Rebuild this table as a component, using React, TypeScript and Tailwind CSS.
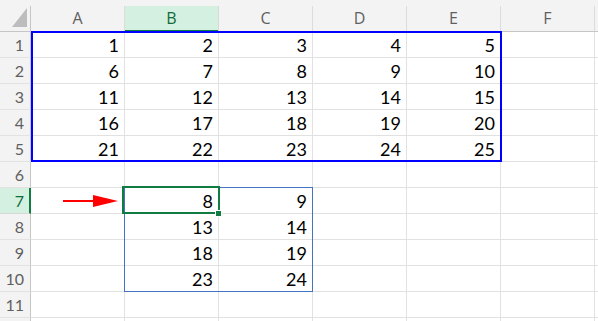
const COLS = ['A', 'B', 'C', 'D', 'E', 'F', 'G'];

// sheet contents, keyed by row number; each entry covers columns A..G
const DATA: Record<number, (number | null)[]> = {
  1: [1, 2, 3, 4, 5],
  2: [6, 7, 8, 9, 10],
  3: [11, 12, 13, 14, 15],
  4: [16, 17, 18, 19, 20],
  5: [21, 22, 23, 24, 25],
  7: [null, 8, 9],
  8: [null, 13, 14],
  9: [null, 18, 19],
  10: [null, 23, 24],
};

const ROWS = [1, 2, 3, 4, 5, 6, 7, 8, 9, 10, 11, 12];
const ACTIVE_ROW = 7;
const ACTIVE_COL = 'B';
// the last column and row only peek in at the window edge, so their labels stay hidden
const LAST_COL = 'G';
const LAST_ROW = 12;

const HeaderRow = () => (
  <div className="flex h-[32px] shrink-0 border-b border-[#c6c6c6] bg-[#f3f3f3] pt-[6px]">
    <div className="relative w-[31px] shrink-0 border-r border-[#c6c6c6]">
      <svg className="absolute left-[12px] top-[2px]" width="15" height="19" viewBox="0 0 15 19">
        <polygon points="15,0 15,19 0,19" fill="#bdbdbd" />
      </svg>
    </div>
    {COLS.map((c) => {
      const active = c === ACTIVE_COL;
      return (
        <div
          key={c}
          className={
            active
              ? 'relative flex w-[94px] shrink-0 items-center justify-center border-r border-[#d8d8d8] bg-[#d3f0e0] pb-[2px] text-[16px] text-[#0f6b3a]'
              : 'flex w-[94px] shrink-0 items-center justify-center border-r border-[#dcdcdc] pb-[2px] text-[16px] text-[#5f5f5f]'
          }
        >
          {c === LAST_COL ? '' : c}
          {active && <div className="absolute bottom-[-1px] left-0 right-0 h-[2px] bg-[#107c41]" />}
        </div>
      );
    })}
  </div>
);

const SheetRow = ({ row }: { row: number }) => {
  const values = DATA[row] || [];
  const active = row === ACTIVE_ROW;
  return (
    <div className="flex h-[26px] shrink-0">
      <div
        className={
          active
            ? 'flex w-[31px] shrink-0 items-center justify-end border-b border-r-2 border-b-[#d8d8d8] border-r-[#107c41] bg-[#d3f0e0] pr-[5px] text-[16px] text-[#0f6b3a]'
            : 'flex w-[31px] shrink-0 items-center justify-end border-b border-r border-b-[#e2e2e2] border-r-[#c6c6c6] bg-[#f3f3f3] pr-[6px] text-[16px] text-[#5f5f5f]'
        }
      >
        {row === LAST_ROW ? '' : row}
      </div>
      {COLS.map((c, i) => (
        <div
          key={c}
          className="flex w-[94px] shrink-0 items-center justify-end border-b border-r border-[#e1e1e1] pr-[5px] pt-[2px] text-[18px] text-black"
        >
          {values[i] ?? ''}
        </div>
      ))}
    </div>
  );
};

export default function App() {
  return (
    <div
      className="relative h-[321px] w-[598px] overflow-hidden bg-white"
      style={{ fontFamily: "Lato, 'Open Sans', sans-serif" }}
    >
      <div className="flex flex-col" style={{ fontFamily: "'Open Sans', sans-serif" }}>
        <HeaderRow />
        <div className="flex flex-col" style={{ fontFamily: "Lato, sans-serif" }}>
          {ROWS.map((r) => (
            <SheetRow key={r} row={r} />
          ))}
        </div>
      </div>

      {/* copied range A1:E5 */}
      <div className="pointer-events-none absolute left-[31px] top-[31px] h-[131px] w-[471px] border-2 border-[#0000ff]" />

      {/* spilled range B7:C10 */}
      <div className="pointer-events-none absolute left-[124px] top-[187px] h-[105px] w-[189px] border border-[#4472c4]" />

      {/* active cell B7 with fill handle */}
      <div className="pointer-events-none absolute left-[122px] top-[186px] h-[28px] w-[98px] border-2 border-[#107c41]" />
      <div className="pointer-events-none absolute left-[215px] top-[210px] h-[7px] w-[7px] border border-white bg-[#107c41]" />

      {/* red arrow pointing at B7 */}
      <svg className="absolute left-[60px] top-[192px]" width="62" height="18" viewBox="0 0 62 18">
        <line x1="3" y1="9" x2="36" y2="9" stroke="#ff0000" strokeWidth="2" />
        <polygon points="33,3 58,9 33,15" fill="#ff0000" />
      </svg>
    </div>
  );
}
